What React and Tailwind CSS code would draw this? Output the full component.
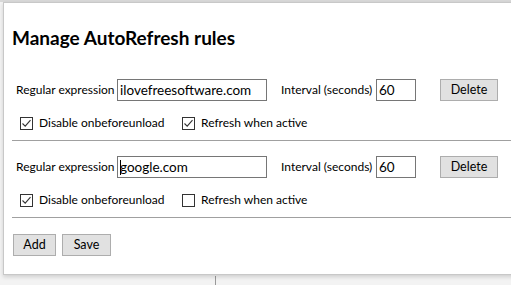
import React from "react";

function Check({ checked }) {
  return (
    <span className="inline-flex h-[13px] w-[13px] shrink-0 items-center justify-center border border-[#333] bg-white">
      {checked && (
        <svg width="11" height="11" viewBox="0 0 11 11">
          <path d="M1.5 5.5 L4.2 8.2 L9.5 2.2" fill="none" stroke="#333" strokeWidth="1.1" />
        </svg>
      )}
    </span>
  );
}

function Rule({ value, d, r, caret }) {
  return (
    <div className="flex flex-col">
      <div className="flex h-[22px] items-center whitespace-nowrap">
        <span className="ml-[4px] w-[101px]">Regular expression</span>
        <div className="flex h-[22px] w-[150px] items-center border border-[#767676] bg-white pl-[2px] text-[13.5px]">
          {caret && <span className="mr-[-1px] inline-block h-[15px] w-px bg-black" />}
          {value}
        </div>
        <span className="ml-[14px] w-[95px]">Interval (seconds)</span>
        <div className="flex h-[22px] w-[40px] items-center border border-[#767676] bg-white pl-[2px] text-[13.5px]">60</div>
        <button className="ml-[24px] h-[22px] w-[58px] border border-[#adadad] bg-[#e1e1e1] text-[12.5px]">Delete</button>
      </div>
      <div className="mt-[14px] flex h-[16px] items-center whitespace-nowrap">
        <span className="ml-[8px] flex w-[162px] items-center">
          <Check checked={d} />
          <span className="ml-[6px]">Disable onbeforeunload</span>
        </span>
        <span className="flex items-center">
          <Check checked={r} />
          <span className="ml-[6px]">Refresh when active</span>
        </span>
      </div>
      <div className="mt-[9px] mr-[8px] h-px bg-[#a0a0a0]" />
    </div>
  );
}

export default function App() {
  return (
    <div
      className="relative h-[285px] w-[511px] overflow-hidden bg-[#f3f3f3] text-[12px] text-black"
      style={{ fontFamily: '"Segoe UI", Lato, "Open Sans", sans-serif' }}
    >
      <div className="absolute left-0 top-0 h-[2px] w-full bg-[#d8d8d8]" />
      <div className="absolute left-[215px] top-[276px] h-[9px] w-px bg-[#999]" />
      <div className="absolute left-[3px] top-[2px] h-[273px] w-[520px] border border-[#c8c8c8] bg-white shadow-[0_2px_4px_rgba(0,0,0,0.15)]">
        <div className="pl-[8px] pt-[23px]">
          <h1 className="text-[19px] font-bold leading-[24px]">Manage AutoRefresh rules</h1>
          <div className="mt-[29px] flex flex-col gap-[15px]">
            <Rule value="ilovefreesoftware.com" d r />
            <Rule value="google.com" d caret />
          </div>
          <div className="mt-[16px] flex gap-[6px] pl-[1px]">
            <button className="h-[22px] w-[43px] border border-[#adadad] bg-[#e1e1e1] text-[12.5px]">Add</button>
            <button className="h-[22px] w-[49px] border border-[#adadad] bg-[#e1e1e1] text-[12.5px]">Save</button>
          </div>
        </div>
      </div>
    </div>
  );
}
